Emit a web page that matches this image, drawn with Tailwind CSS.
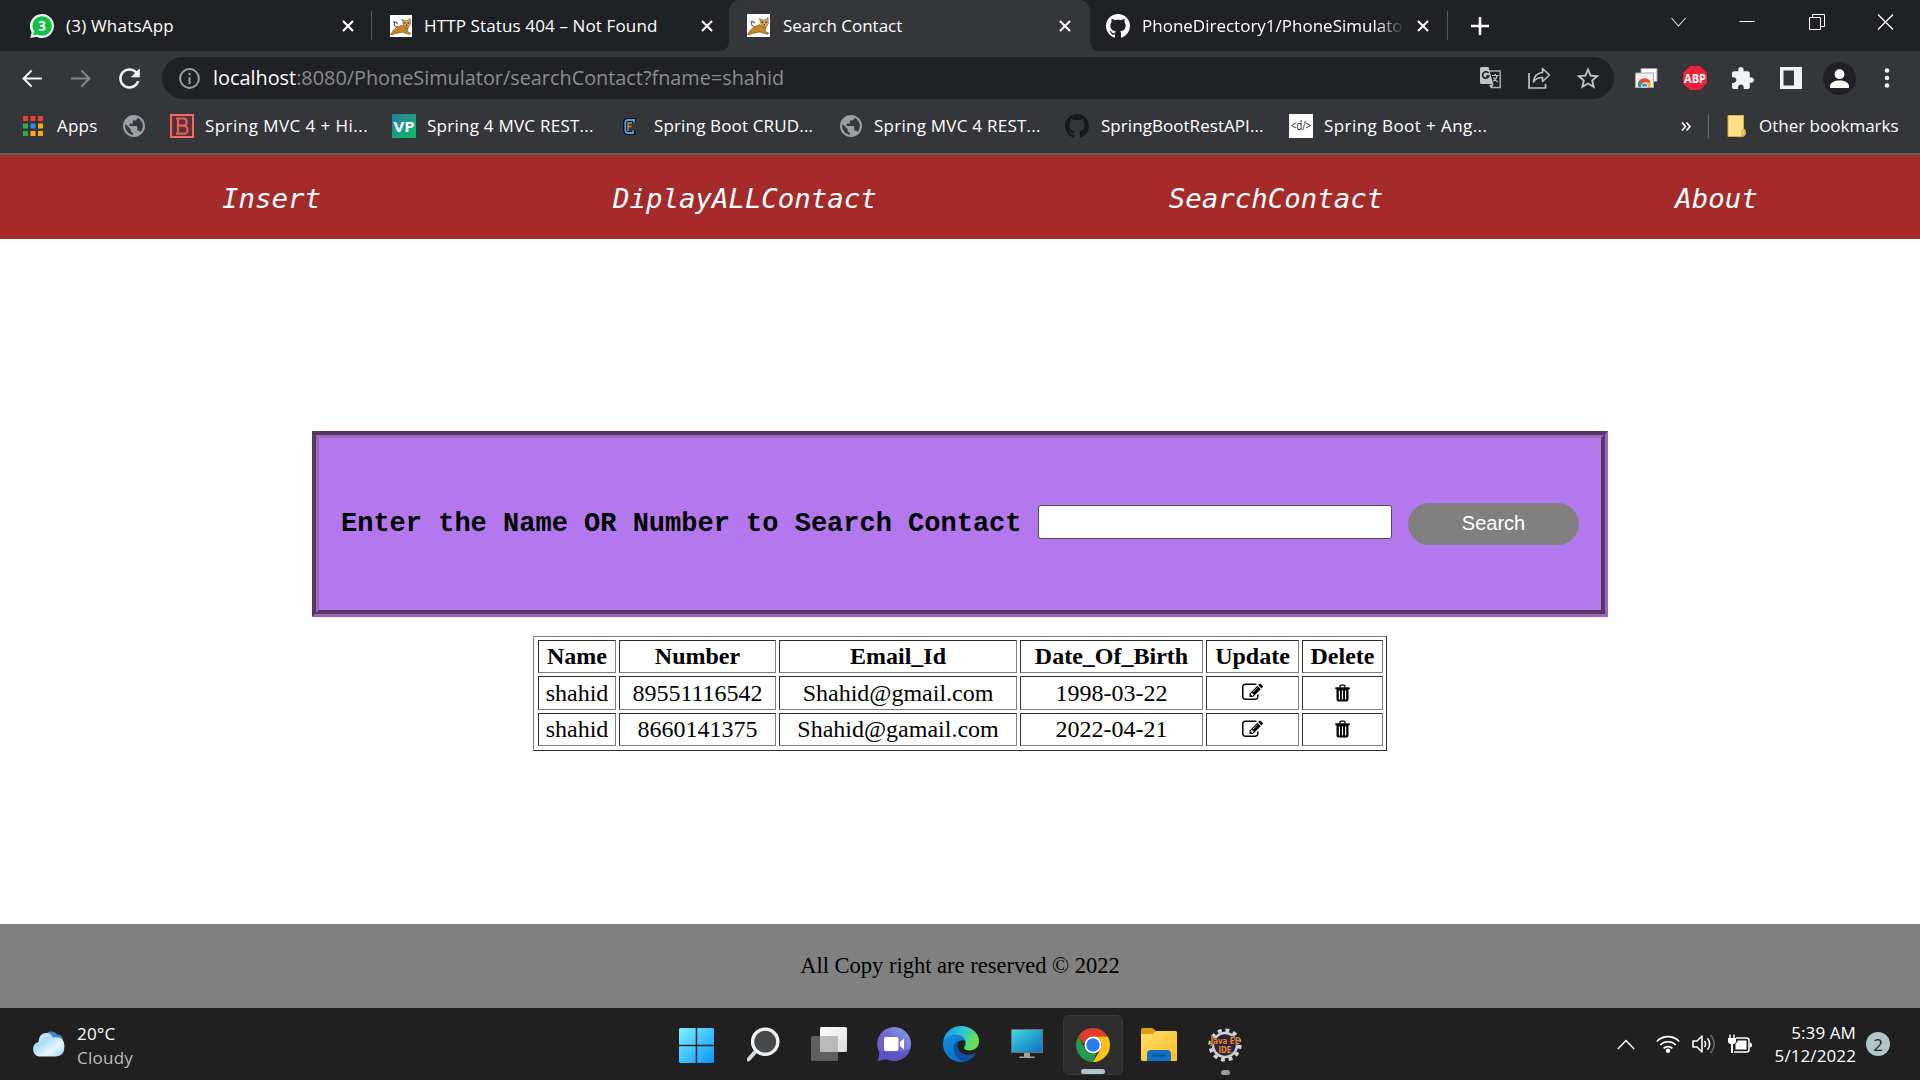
<!DOCTYPE html>
<html lang="en">
<head>
<meta charset="utf-8">
<title>Search Contact</title>
<script src="https://cdn.jsdelivr.net/npm/@tailwindcss/browser@4"></script>
</head>
<body class="w-[1920px] h-[1080px] overflow-hidden bg-white flex flex-col font-['Open_Sans',sans-serif] text-[17px]">

<svg class="hidden">
  <symbol id="x" viewBox="0 0 12 12"><path d="M1 1l10 10M11 1L1 11" stroke="#fff" stroke-width="2.1"/></symbol>
  <symbol id="globe" viewBox="2 2 20 20"><path fill="#9aa0a6" d="M12 2C6.48 2 2 6.48 2 12s4.480 10 10 10 10-4.480 10-10S17.520 2 12 2zm-1 17.930c-3.950-.49-7-3.850-7-7.930 0-.62.08-1.210.21-1.790L9 15v1c0 1.100.9 2 2 2v1.930zm6.900-2.540c-.26-.81-1-1.390-1.900-1.390h-1v-3c0-.55-.45-1-1-1H8v-2h2c.55 0 1-.45 1-1V7h2c1.100 0 2-.9 2-2v-.41c2.930 1.190 5 4.060 5 7.410 0 2.080-.8 3.970-2.100 5.390z"/></symbol>
  <symbol id="github" viewBox="0 0 16 16"><path d="M8 0C3.580 0 0 3.580 0 8c0 3.540 2.290 6.530 5.470 7.590.4.07.55-.17.55-.38 0-.19-.01-.82-.01-1.490-2.010.37-2.530-.49-2.690-.94-.09-.23-.48-.94-.82-1.130-.28-.15-.68-.52-.01-.53.63-.01 1.080.58 1.230.82.72 1.210 1.870.87 2.330.66.07-.52.28-.87.51-1.070-1.780-.2-3.640-.89-3.640-3.950 0-.87.31-1.590.82-2.150-.08-.2-.36-1.020.08-2.120 0 0 .67-.21 2.200.82.64-.18 1.320-.27 2-.27s1.360.09 2 .27c1.530-1.040 2.200-.82 2.200-.82.44 1.100.16 1.920.08 2.120.51.56.82 1.270.82 2.150 0 3.070-1.870 3.750-3.650 3.950.29.25.54.73.54 1.480 0 1.070-.01 1.930-.01 2.200 0 .21.15.46.55.38A8.010 8.010 0 0 0 16 8c0-4.420-3.580-8-8-8z"/></symbol>
  <symbol id="tomcat" viewBox="0 0 23 23">
    <rect width="23" height="23" fill="#fff"/>
    <path d="M8 12.500C5 12.500 3.500 10 5 8M3.500 7.500c1.500-.8 3 0 4.500 1.500" fill="none" stroke="#555" stroke-width="1.100"/>
    <path d="M12.500 4.500l2.500 1.500h3.500L21 3.500l.3 6-2 3.500L15 13z" fill="#dcab5a" stroke="#5a4218" stroke-width=".6"/>
    <path d="M13 10.500l3 3h3l-1 3.500 3.500 2-.5 1.500-5-1.500-3-1-5 1-3 .5-2.500 1.500-2-.5 3-4.500 4-3.500z" fill="#bf8526" stroke="#5a4218" stroke-width=".5"/>
    <path d="M15.500 8.300h.1M19 8.300h.1M17.300 10.800h.1" stroke="#222" stroke-width="1.500" stroke-linecap="round"/>
  </symbol>
  <symbol id="edit" viewBox="0 0 1792 1792"><path d="M888 1184l116-116-152-152-116 116v56h96v96h56zm440-720q-16-16-33 1l-350 350q-17 17-1 33t33-1l350-350q17-17 1-33zm80 594v190q0 119-84.500 203.500t-203.500 84.500h-832q-119 0-203.500-84.500t-84.500-203.500v-832q0-119 84.500-203.500t203.500-84.500h832q63 0 117 25 15 7 18 23 3 17-9 29l-49 49q-14 14-32 8-23-6-45-6h-832q-66 0-113 47t-47 113v832q0 66 47 113t113 47h832q66 0 113-47t47-113v-126q0-13 9-22l64-64q15-15 35-7t20 29zm-96-738l288 288-672 672h-288v-288zm444 132l-92 92-288-288 92-92q28-28 68-28t68 28l152 152q28 28 28 68t-28 68z"/></symbol>
  <symbol id="trash" viewBox="0 0 15 18"><path d="M5 3.500V2.500Q5 1.200 6.200 1.200h2.600Q10 1.200 10 2.500v1" fill="none" stroke="#000" stroke-width="1.300"/><path d="M.3 3.300h14.400v1.900H.3z"/><path fill-rule="evenodd" d="M1.500 5h12v10.500q0 2-2 2h-8q-2 0-2-2zM3.800 6.500v9h1.200v-9zM6.900 6.500v9h1.200v-9zM10 6.500v9h1.200v-9z"/></symbol>
</svg>

<!-- Tab strip -->
<div class="h-[51px] shrink-0 bg-[#202124] flex items-center text-white whitespace-nowrap">
  <div class="w-[371px] pl-[30px] pr-[17px] flex items-center">
    <svg class="w-6 h-6" viewBox="0 0 24 24"><path d="M12 0a12 12 0 1 1-5.500 22.700L.3 24l1.400-5.800A12 12 0 0 1 12 0z" fill="#f2f5f3"/><circle cx="12.200" cy="12" r="9.800" fill="#12c143"/><path d="M3 21.500l1-4 3 3z" fill="#12c143"/><text x="12.200" y="17" text-anchor="middle" font-family="Open Sans" font-weight="700" font-size="13.500" fill="#fff">3</text></svg>
    <span class="ml-3 flex-1 tracking-[0.2px]">(3) WhatsApp</span>
    <svg class="w-3 h-3"><use href="#x"/></svg>
  </div>
  <div class="w-px h-[29px] bg-[#54565a]"></div>
  <div class="w-[357px] pl-[18px] pr-4 flex items-center">
    <svg class="w-[22px] h-[22px]"><use href="#tomcat"/></svg>
    <span class="ml-3 flex-1 tracking-[0.13px]">HTTP Status 404 – Not Found</span>
    <svg class="w-3 h-3"><use href="#x"/></svg>
  </div>
  <div class="relative w-[361px] h-full rounded-t-[11px] bg-[#35363a] pl-[18px] pr-[19px] flex items-center">
    <svg class="absolute -left-[10px] bottom-0 w-[10px] h-[10px]" viewBox="0 0 10 10"><path d="M10 0v10H0Q10 10 10 0z" fill="#35363a"/></svg>
    <svg class="absolute -right-[10px] bottom-0 w-[10px] h-[10px]" viewBox="0 0 10 10"><path d="M0 0v10h10Q0 10 0 0z" fill="#35363a"/></svg>
    <svg class="w-[23px] h-[23px]"><use href="#tomcat"/></svg>
    <span class="ml-[13px] flex-1">Search Contact</span>
    <svg class="w-3 h-3"><use href="#x"/></svg>
  </div>
  <div class="w-[357px] pl-4 pr-[18px] flex items-center">
    <svg class="w-6 h-6 fill-white"><use href="#github"/></svg>
    <div class="ml-3 w-[262px] overflow-hidden mask-r-from-90%">PhoneDirectory1/PhoneSimulator</div>
    <svg class="w-3 h-3 ml-auto"><use href="#x"/></svg>
  </div>
  <div class="w-px h-[29px] bg-[#54565a]"></div>
  <svg class="ml-[23px] w-[18px] h-[18px]" viewBox="0 0 18 18"><path d="M9 0v18M0 9h18" stroke="#fff" stroke-width="2.600"/></svg>
  <div class="ml-auto flex pb-2">
    <svg class="w-[69px] h-4" viewBox="-34.500 -8 69 16"><path d="M-7-4l7 8 7-8" fill="none" stroke="#e0e0e0" stroke-width="1.100"/></svg>
    <svg class="w-[69px] h-4" viewBox="-34.500 -8 69 16"><path d="M-8-.5h15" stroke="#fff"/></svg>
    <svg class="w-[69px] h-4" viewBox="-34.500 -8 69 16"><path d="M-7-4.500h11v12h-11zM-4-4.500v-3h12v12h-4" fill="none" stroke="#fff"/></svg>
    <svg class="w-[69px] h-4" viewBox="-34.500 -8 69 16"><path d="M-7.500-7.500l15 15M7.500-7.500l-15 15" stroke="#fff" stroke-width="1.200"/></svg>
  </div>
</div>

<!-- Address bar -->
<div class="h-[54px] shrink-0 bg-[#35363a] flex items-center">
  <svg class="ml-[20px] w-[25px] h-[25px]" viewBox="0 0 24 24"><path fill="#f1f3f4" d="M21 11H5.830l6.090-6.090L10.500 3.500l-8.500 8.500 8.500 8.500 1.410-1.410L5.830 13H21v-2z"/></svg>
  <svg class="ml-[24px] w-[25px] h-[25px]" viewBox="0 0 24 24"><path fill="#85878b" d="M2 11h15.170l-6.090-6.090L12.500 3.500l8.500 8.500-8.500 8.500-1.410-1.410L17.170 13H2v-2z"/></svg>
  <svg class="ml-[20px] w-[31px] h-[31px]" viewBox="0 0 24 24"><path fill="#f1f3f4" d="M17.650 6.350C16.200 4.900 14.210 4 12 4c-4.420 0-7.990 3.580-7.990 8s3.570 8 7.990 8c3.730 0 6.840-2.550 7.730-6h-2.080c-.82 2.330-3.040 4-5.650 4-3.310 0-6-2.690-6-6s2.690-6 6-6c1.660 0 3.140.69 4.220 1.780L13 11h7V4l-2.350 2.350z"/></svg>
  <div class="ml-[17px] w-[1452px] h-[42px] rounded-full bg-[#202124] flex items-center">
    <svg class="ml-[17px] w-[21px] h-[21px]" viewBox="0 0 21 21"><circle cx="10.500" cy="10.500" r="9.400" fill="none" stroke="#9aa0a6" stroke-width="2"/><path d="M9.500 5h2v2.200h-2zM9.500 9.200h2V16h-2z" fill="#9aa0a6"/></svg>
    <div class="ml-[13px] text-[19.850px] leading-none text-[#8b8d91] whitespace-nowrap">
      <span class="text-white">localhost</span>:8080/PhoneSimulator/searchContact?fname=shahid</div>
    <svg class="ml-auto w-[22px] h-[22px]" viewBox="0 0 22 22"><path d="M9 4h11.200v16.500H11" fill="none" stroke="#a9abae" stroke-width="1.500"/><path d="M1.500 0h7l4.700 17H1.500Q0 17 0 15.500v-14Q0 0 1.500 0zM9 18l5-1-3 4.500z" fill="#c0c2c4"/><path d="M8.600 6.100A3.300 3.300 0 1 0 9 9.100H6.300" fill="none" stroke="#202124" stroke-width="1.600"/><path d="M12 8.500h6.500M15.300 7v1.500M17.300 8.500q-1 4-4 6M13.500 10.500q1.500 3 4.500 4.500" fill="none" stroke="#c0c2c4" stroke-width="1.200"/></svg>
    <svg class="ml-[26px] w-[23px] h-[22px]" viewBox="0 0 23 22"><path d="M1 6v15h16.500v-4" fill="none" stroke="#c0c2c4" stroke-width="1.700"/><path d="M14.500 1.500l7 6.500-7 6.500v-4c-4.500 0-7 1.300-9 4.500.5-5 3.500-9 9-9.500z" fill="none" stroke="#c0c2c4" stroke-width="1.600" stroke-linejoin="round"/></svg>
    <svg class="ml-[25px] mr-[14px] w-[24px] h-[24px]" viewBox="1.500 1 21 21"><path fill="#c4c7ca" d="M22 9.240l-7.190-.62L12 2 9.190 8.630 2 9.240l5.460 4.730L5.820 21 12 17.270 18.180 21l-1.630-7.030L22 9.240zM12 15.400l-3.760 2.270 1-4.280-3.320-2.880 4.380-.38L12 6.100l1.710 4.040 4.380.38-3.320 2.880 1 4.280L12 15.400z"/></svg>
  </div>
  <svg class="ml-[21px] w-[23px] h-[20px]" viewBox="0 0 23 20"><path d="M6 .5h16v13H6z" fill="#fff" stroke="#999"/><path d="M.5 5h18v14.500H.5z" fill="#f1f1f1" stroke="#aaa"/><path d="M3.500 19A6.200 6.200 0 0 1 4.200 12.500l4.300 4-1 2.500z" fill="#1fa463"/><path d="M4 13a6.500 6.500 0 0 1 11.500 1.500H9.500l-2 1.500z" fill="#ea4335"/><path d="M15.500 14.500q.8 2.500-.2 4.500H11l1-4.500z" fill="#fbbc05"/><path d="M6.700 19a3 3 0 1 1 5.600 0z" fill="#4285f4" stroke="#fff" stroke-width=".8"/></svg>
  <svg class="ml-[25px] w-6 h-6" viewBox="0 0 24 24"><path d="M7 0h10l7 7v10l-7 7H7l-7-7V7z" fill="#f0203c"/><text x="12" y="16.500" text-anchor="middle" font-family="Open Sans" font-weight="700" font-size="12.500" textLength="22" lengthAdjust="spacingAndGlyphs" fill="#fff">ABP</text></svg>
  <svg class="ml-[25px] w-[22px] h-[22px]" viewBox="2 1 21 21"><path fill="#f1f3f4" d="M20.500 11H19V7c0-1.100-.9-2-2-2h-4V3.500C13 2.120 11.880 1 10.500 1S8 2.120 8 3.500V5H4c-1.100 0-1.990.9-1.990 2v3.800H3.500c1.490 0 2.700 1.210 2.700 2.700s-1.210 2.700-2.700 2.700H2V20c0 1.100.9 2 2 2h3.800v-1.500c0-1.490 1.210-2.700 2.700-2.700 1.490 0 2.700 1.210 2.700 2.700V22H17c1.100 0 2-.9 2-2v-4h1.500c1.380 0 2.500-1.120 2.500-2.500S21.880 11 20.500 11z"/></svg>
  <svg class="ml-[26px] w-[22px] h-[22px]" viewBox="0 0 22 22"><path fill-rule="evenodd" fill="#f1f3f4" d="M0 0h22v22H0zM3.500 3.500v15h10.500v-15z"/></svg>
  <svg class="ml-[21px] w-[33px] h-[33px]" viewBox="0 0 33 33"><circle cx="16.500" cy="16.500" r="16.500" fill="#202124"/><circle cx="16.500" cy="12.200" r="4.900" fill="#fff"/><path d="M7 26v-2c0-3.500 5-5.500 9.500-5.500S26 20.500 26 24v2z" fill="#fff"/></svg>
  <svg class="ml-[28px] w-[6px] h-[20px] fill-[#f1f3f4]" viewBox="0 0 6 20"><circle cx="3" cy="2.500" r="2.300"/><circle cx="3" cy="10" r="2.300"/><circle cx="3" cy="17.500" r="2.300"/></svg>
</div>

<!-- Bookmarks -->
<div class="h-[50px] shrink-0 bg-[#35363a] border-b-2 border-[#5f6064] flex items-center text-white whitespace-nowrap pb-[6px]">
  <svg class="ml-[23px] w-5 h-[20px]" viewBox="0 0 20 20"><path d="M0 0h5v5H0zM7.500 0h5v5h-5zM15 0h5v5h-5z" fill="#ea4335"/><path d="M0 7.500h5v5H0zM0 15h5v5H0z" fill="#34a853"/><path d="M7.500 7.500h5v5h-5z" fill="#2a8cf5"/><path d="M15 7.500h5v5h-5zM7.500 15h5v5h-5zM15 15h5v5h-5z" fill="#fbac08"/></svg>
  <span class="ml-[14px] w-[66px] tracking-[0.2px]">Apps</span>
  <svg class="w-[22px] h-[22px]"><use href="#globe"/></svg>
  <svg class="ml-[25px] w-6 h-6" viewBox="0 0 24 24"><rect x="1" y="1" width="22" height="22" fill="#5a3236" stroke="#ef6a63" stroke-width="2"/><path d="M8 4.500h5.500q3 0 3 3.500 0 3-2 3.700 3 .8 3 4 0 4-3.500 4H8zM6 4.500h3M6 19.700h3M8 11.700h6" fill="none" stroke="#e2605c" stroke-width="2.200"/></svg>
  <span class="ml-[11px] w-[187px] tracking-[0.45px]">Spring MVC 4 + Hi...</span>
  <svg class="w-6 h-6" viewBox="0 0 24 24"><defs><linearGradient id="vp" x2="1" y2="1"><stop stop-color="#2a7aa0"/><stop offset="1" stop-color="#0cc062"/></linearGradient></defs><rect width="24" height="24" fill="url(#vp)"/><text x="12" y="18" text-anchor="middle" font-family="Open Sans" font-weight="700" font-size="15" textLength="21" lengthAdjust="spacingAndGlyphs" fill="#fff">VP</text></svg>
  <span class="ml-[11px] w-[196px] tracking-[0.25px]">Spring 4 MVC REST...</span>
  <svg class="w-[13px] h-[17px]" viewBox="0 0 13 17"><path d="M11.500 4.500V2H5Q2 2 2 5v7q0 3 3 3h5.500v-2.500" fill="none" stroke="#111" stroke-width="4"/><path d="M11 4.500V2H5Q2.300 2 2.300 5v7q0 3 3 3H10v-2.500" fill="none" stroke="#4aa3e0" stroke-width="1.800"/><path d="M5 13V5h4M5 8.500h3.500" fill="none" stroke="#c98d4a" stroke-width="1.300"/></svg>
  <span class="ml-[18px] w-[186px] tracking-[0.15px]">Spring Boot CRUD...</span>
  <svg class="w-[22px] h-[22px]"><use href="#globe"/></svg>
  <span class="ml-3 w-[191px] tracking-[0.25px]">Spring MVC 4 REST...</span>
  <svg class="w-6 h-6 fill-[#17181a]"><use href="#github"/></svg>
  <span class="ml-3 w-[188px] tracking-[0.05px]">SpringBootRestAPI...</span>
  <svg class="w-6 h-6" viewBox="0 0 24 24"><rect width="24" height="24" fill="#fff"/><text x="12" y="16.300" text-anchor="middle" font-family="Open Sans" font-size="12" textLength="20" lengthAdjust="spacingAndGlyphs" fill="#111">&lt;d/&gt;</text></svg>
  <span class="ml-[11px] tracking-[0.42px]">Spring Boot + Ang...</span>
  <svg class="ml-auto w-[10px] h-[9px]" viewBox="0 0 10 9"><path d="M1 .5l3.500 4L1 8.500M5.500.5L9 4.500l-3.500 4" fill="none" stroke="#fff" stroke-width="1.600"/></svg>
  <div class="ml-[17px] w-px h-6 bg-[#6a6b6f]"></div>
  <svg class="ml-[18px] w-[19px] h-[22px]" viewBox="0 0 19 22"><path d="M1 .5h15.500v14l2 1.500v3.500L16 21.500H1z" fill="#ffe08a" stroke="#d9b13f"/><path d="M15 21v-5.500l3-1.500v5.500z" fill="#f7cf5c" stroke="#c69a2c" stroke-width=".7"/></svg>
  <span class="ml-[13px] w-[161px]">Other bookmarks</span>
</div>

<!-- Site navigation -->
<nav class="h-[84px] shrink-0 bg-[#a52a2a] flex items-center gap-[292px] pl-[222px] pt-1 text-white italic text-[27.400px] font-['DejaVu_Sans_Mono',monospace] whitespace-nowrap">
  <a>Insert</a><a>DiplayALLContact</a><a>SearchContact</a><a>About</a>
</nav>

<!-- Search form and results -->
<main class="flex-1 flex flex-col items-center pt-48">
  <form class="w-[1296px] h-[186px] shrink-0 border-7 [border-style:groove] border-[#a066b8] bg-[#b378ee] flex items-center pl-[22px]">
    <label class="w-[697px] whitespace-nowrap font-bold text-[27px] leading-none font-['Liberation_Mono',monospace]">Enter the Name OR Number to Search Contact</label>
    <input class="w-[354px] h-[34px] mb-1 bg-white border border-[#4d4d4d] rounded-[3px]">
    <button type="button" class="ml-4 w-[171px] h-[42px] rounded-[21px] bg-[#808080] text-white text-[20px] pb-0.5 font-['Liberation_Sans',sans-serif]">Search</button>
  </form>
  <div class="mt-[19px] w-[854px] h-[115px] shrink-0 border border-t-[#808080] border-l-[#808080] border-b-[#2c2c2c] border-r-[#2c2c2c] pt-[3px] pl-1 grid grid-cols-[78px_157px_238px_183px_93px_81px] grid-rows-[33px_34px_33px] gap-[3px] font-['Liberation_Serif',serif] text-[24px] leading-none text-black *:flex *:items-center *:justify-center *:pb-px *:border *:border-t-[#2c2c2c] *:border-l-[#2c2c2c] *:border-b-[#808080] *:border-r-[#808080]">
    <div class="font-bold">Name</div><div class="font-bold">Number</div><div class="font-bold">Email_Id</div><div class="font-bold">Date_Of_Birth</div><div class="font-bold">Update</div><div class="font-bold">Delete</div>
    <div>shahid</div><div>89551116542</div><div>Shahid@gmail.com</div><div>1998-03-22</div><div><svg class="w-[21px] h-[21px]"><use href="#edit"/></svg></div><div><svg class="w-[15px] h-[18px]"><use href="#trash"/></svg></div>
    <div>shahid</div><div>8660141375</div><div>Shahid@gamail.com</div><div>2022-04-21</div><div><svg class="w-[21px] h-[21px]"><use href="#edit"/></svg></div><div><svg class="w-[15px] h-[18px]"><use href="#trash"/></svg></div>
  </div>
</main>

<footer class="h-[84px] shrink-0 bg-[#808080] flex items-center justify-center font-['Liberation_Serif',serif] text-[22.500px] text-black">All Copy right are reserved © 2022</footer>

<!-- Taskbar -->
<div class="h-[72px] shrink-0 bg-[#202020] flex items-center text-white whitespace-nowrap">
  <svg class="ml-[31px] w-[34px] h-[26px]" viewBox="0 0 34 26"><defs><linearGradient id="cl" x2="1" y2="1"><stop stop-color="#f2fbff"/><stop offset=".35" stop-color="#a9dcfa"/><stop offset=".65" stop-color="#e8f6fe"/><stop offset="1" stop-color="#9fd4f2"/></linearGradient></defs><path d="M13 5Q17-1 23 1q2 .5 3 2.500 6 0 6 6l-1 6z" fill="#3f86c9"/><path d="M8 25.500a7.500 7.500 0 0 1-.5-14.500Q8 2 15.500 2 20 2 22 6.500q11-2 11.500 8.500 0 10.500-9 10.500z" fill="url(#cl)"/></svg>
  <div class="ml-3 pt-[3px] w-[602px] flex flex-col text-[17px] leading-6 tracking-[0.25px]"><span>20°C</span><span class="text-[#bcbcbc]">Cloudy</span></div>
  <svg class="w-[35px] h-[35px] mb-[-3px]" viewBox="0 0 35 35"><defs><linearGradient id="wn" gradientUnits="userSpaceOnUse" x1="0" y1="0" x2="35" y2="35"><stop stop-color="#7af3fd"/><stop offset="1" stop-color="#0a94fb"/></linearGradient></defs><path d="M1 0h15.700v16.700H0V1zM18.200 0H34l1 1v15.700H18.200zM0 18.200h16.700V35H1l-1-1zM18.200 18.200H35V34l-1 1H18.200z" fill="url(#wn)"/></svg>
  <svg class="ml-[33px] w-[33px] h-[35px]" viewBox="0 0 33 35"><path d="M9 24L1.500 32.500" stroke="#d5d9dc" stroke-width="4" stroke-linecap="round"/><circle cx="18.200" cy="14.700" r="12.600" fill="#47484a" stroke="#eef0f1" stroke-width="3.400"/></svg>
  <svg class="ml-[31px] w-[36px] h-[34px]" viewBox="0 0 36 34"><defs><linearGradient id="tv" x2="1" y2="1"><stop stop-color="#fff"/><stop offset="1" stop-color="#dcdcdc"/></linearGradient></defs><rect y="9" width="27" height="25" rx="1.500" fill="#5f5f5f"/><rect x="9" width="27" height="25" rx="1.500" fill="url(#tv)"/><path d="M9 9h18v16H10q-1 0-1-1z" fill="#b9b9b9"/></svg>
  <svg class="ml-[30px] w-[34px] h-[34px]" viewBox="0 0 34 34"><defs><linearGradient id="ct" x1="0" y1="1" x2="1" y2="0"><stop stop-color="#5b55c8"/><stop offset=".5" stop-color="#7766c6"/><stop offset="1" stop-color="#7da6f4"/></linearGradient></defs><path d="M17 0a17 17 0 1 1-8 32L1 34l1.500-8.500A17 17 0 0 1 17 0z" fill="url(#ct)"/><path d="M17 34A17 17 0 0 0 33 22q-12 6-30 2l-2 10 8-2q4 2 8 2z" fill="#5450c4" opacity=".7"/><rect x="7" y="10" width="14.500" height="14" rx="2" fill="#fff"/><path d="M23 15l4-3.500v11L23 19z" fill="#fff"/></svg>
  <svg class="ml-[32px] w-[36px] h-[36px]" viewBox="0 0 36 36"><defs><linearGradient id="e1" x2="1" y2=".4"><stop stop-color="#1c8fe0"/><stop offset=".5" stop-color="#2bc1dd"/><stop offset="1" stop-color="#6ae04f"/></linearGradient><linearGradient id="e2" x2="1" y2="1"><stop stop-color="#1392e2"/><stop offset="1" stop-color="#0a5fb8"/></linearGradient></defs><path d="M0 16C1.500 6 9 0 18 0c10 0 18 7 18 15 0 6-4.500 9.500-9.500 9.500-3 0-5.500-1-5.500-2.500 0-1 1.500-2 1.500-5 0-4.500-4-7.500-9-7.500C6 9.500 1 13 0 16z" fill="url(#e1)"/><path d="M0 16c2-5 7-7.500 12.500-7.500 6 0 9.500 3.500 10 7C21 14 18.500 14 16.500 15c-3.500 2-4 7-1 11.500C18 30.500 24 34 29 32c-3 2.700-7 4-11 4C8 36 0 28 0 18z" fill="url(#e2)"/><path d="M11 19c-1.500 7 3 14.500 10 16.500 5-.5 9.500-3.500 12-8-.5-.8-1.200-.6-2-.2-6.500 3.200-15.500 1.200-16.500-7.300-.2-1.500.2-3.500 1.500-5-2.500.5-4.500 2-5 4z" fill="#114f9f"/></svg>
  <svg class="ml-[32px] w-[32px] h-[30px]" viewBox="0 0 32 30"><defs><linearGradient id="mn" x2="1" y2="1"><stop stop-color="#3fd8e0"/><stop offset="1" stop-color="#0c6fc4"/></linearGradient></defs><path d="M0 0h32v24H0z" fill="#6c7479"/><path d="M1 1h30v22H1z" fill="url(#mn)"/><path d="M13 24h6v3.500h4.500V29h-15v-1.500H13z" fill="#9ca3a8"/></svg>
  <div class="ml-[20px] relative w-[60px] h-[60px] mt-[2px] rounded-[6px] bg-[#2d2d2d] border border-[#383838] flex items-center justify-center">
    <svg class="w-[34px] h-[34px]" viewBox="0 0 34 34"><path d="M2.300 8.500A17 17 0 0 1 31.700 8.500H17a8.500 8.500 0 0 0-7.400 4.200l-2.100 3z" fill="#e33b2e"/><path d="M2.300 8.500L9.640 21.250A8.500 8.500 0 0 0 17 25.500l3.500-.5L17 34A17 17 0 0 1 2.300 8.500z" fill="#229a4c"/><path d="M31.700 8.500A17 17 0 0 1 17 34l7.360-12.750A8.500 8.500 0 0 0 24.300 12.700L17 8.500z" fill="#fcc016"/><circle cx="17" cy="17" r="8.500" fill="#fff"/><circle cx="17" cy="17" r="6.700" fill="#2e7bee"/></svg>
    <div class="absolute left-[17px] bottom-0 w-6 h-[5px] rounded-full bg-[#afc5cb]"></div>
  </div>
  <svg class="ml-[18px] w-[36px] h-[33px]" viewBox="0 0 36 33"><defs><linearGradient id="fl" x2="1" y2="1"><stop stop-color="#ffdb6b"/><stop offset="1" stop-color="#fcbf24"/></linearGradient></defs><path d="M0 1.500Q0 0 1.500 0h9Q12 0 13 1l2.500 3V8H0z" fill="#e09c0b"/><path d="M0 6h12l3-3h19.500Q36 3 36 4.500V33H1.500Q0 33 0 31.500z" fill="url(#fl)"/><path d="M6 33V26q0-4 4-4h16q4 0 4 4v7z" fill="#1071c8"/><path d="M11 27.500h14" stroke="#0b4a92" stroke-width="2"/></svg>
  <div class="ml-[30px] relative w-[36px] h-[60px] mt-[2px] flex items-center justify-center">
    <svg class="w-[36px] h-[36px]" viewBox="0 0 36 36"><circle cx="18" cy="18" r="14.800" fill="none" stroke="#d4d4d4" stroke-width="3.600" stroke-dasharray="3.900 3.850"/><circle cx="18" cy="18" r="12" fill="#2c2540" stroke="#d0d0d0" stroke-width="2.500"/><text x="18" y="17" text-anchor="middle" font-family="DejaVu Sans" font-weight="700" font-size="8" textLength="29" lengthAdjust="spacingAndGlyphs" fill="#e8892c" stroke="#201810" stroke-width="1.200" paint-order="stroke">Java EE</text><text x="18" y="25.500" text-anchor="middle" font-family="DejaVu Sans" font-weight="700" font-size="8.500" textLength="13" lengthAdjust="spacingAndGlyphs" fill="#e8892c">IDE</text></svg>
    <div class="absolute left-[14px] bottom-0 w-[9px] h-[5px] rounded-full bg-[#9b9b9b]"></div>
  </div>
  <svg class="ml-auto w-[18px] h-[11px]" viewBox="0 0 18 11"><path d="M.8 10L9 1.500 17.200 10" fill="none" stroke="#fff" stroke-width="1.400"/></svg>
  <svg class="ml-[21px] w-6 h-[18px]" viewBox="0 0 24 18"><path d="M.8 6.500a15.500 15.500 0 0 1 22.400 0M4.200 10a11 11 0 0 1 15.600 0M7.600 13.400a6.300 6.300 0 0 1 8.800 0" fill="none" stroke="#fff" stroke-width="1.700"/><circle cx="12" cy="15.700" r="2.200" fill="#fff"/></svg>
  <svg class="ml-[12px] w-6 h-[20px]" viewBox="0 0 24 20"><path d="M1 7h4l5-5v16l-5-5H1z" fill="none" stroke="#fff" stroke-width="1.600" stroke-linejoin="round"/><path d="M12.500 7q2.200 3 0 6M15.500 4.200q4.300 5.800 0 11.600" fill="none" stroke="#fff" stroke-width="1.500"/><path d="M18.500 1q7.500 9 0 18" fill="none" stroke="#666" stroke-width="1.500"/></svg>
  <svg class="ml-[12px] w-6 h-[20px]" viewBox="0 0 24 20"><path d="M2 .5v4M6 .5v4" stroke="#fff" stroke-width="1.500"/><path d="M0 4h8v3q0 3-3 3v9H3v-9Q0 10 0 7z" fill="#fff"/><path d="M8 4h10.500Q21 4 21 6.500v9q0 2.500-2.500 2.500H6" fill="none" stroke="#fff" stroke-width="1.500"/><path d="M10 6.500h8.500v9H7.500V10z" fill="#fff"/><path d="M21.500 8.500q2.500 0 2.500 2.500t-2.500 2.500z" fill="#fff"/></svg>
  <div class="w-[104px] flex flex-col text-right text-[17px] leading-[23px] tracking-[0.1px]"><span>5:39 AM</span><span>5/12/2022</span></div>
  <div class="ml-[10px] mr-[30px] w-6 h-6 rounded-full bg-[#afc5cb] text-[#222] text-[17px] leading-none flex items-center justify-center">2</div>
</div>
</body>
</html>
